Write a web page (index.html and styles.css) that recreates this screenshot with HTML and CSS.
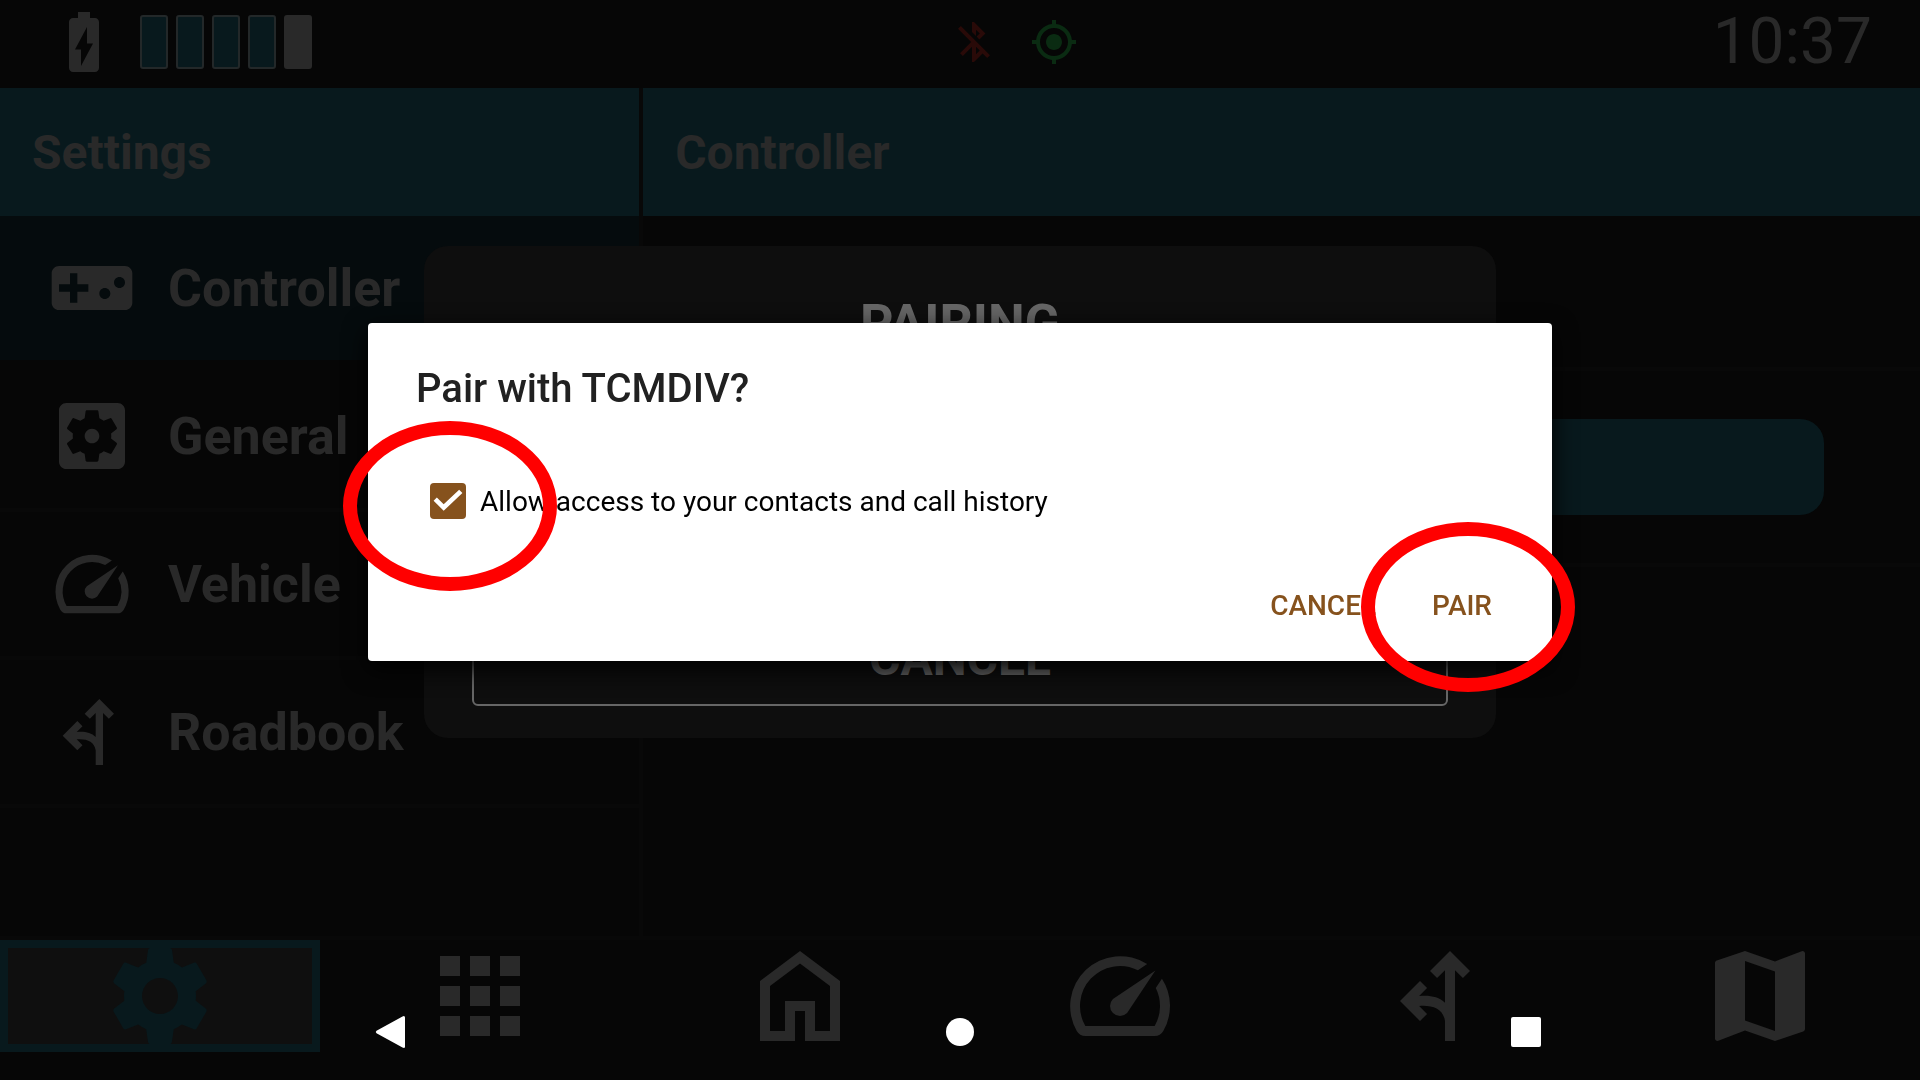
FILE: index.html
```html
<!DOCTYPE html>
<html lang="en">
<head>
  <meta charset="UTF-8">
  <title>Controller settings</title>
  <meta name="viewport" content="width=device-width, initial-scale=1.0">
  <link rel="stylesheet" href="styles.css">
</head>
<body>

<div class="app">
  <header class="status-bar">
    <div class="battery">
      <svg class="battery-icon" viewBox="0 0 24 24"><path d="M15.67 4H14V2h-4v2H8.33C7.6 4 7 4.6 7 5.33v15.33C7 21.4 7.6 22 8.33 22h7.33c.74 0 1.34-.6 1.34-1.33V5.33C17 4.6 16.4 4 15.67 4zM11 20v-5.5H9L13 7v5.5h2L11 20z"/></svg>
      <div class="battery-level">
        <span class="cell full"></span>
        <span class="cell full"></span>
        <span class="cell full"></span>
        <span class="cell full"></span>
        <span class="cell"></span>
      </div>
    </div>
    <div class="signals">
      <svg class="bluetooth" viewBox="0 0 24 24"><path d="M13 5.83l1.88 1.88-1.6 1.6 1.41 1.41 3.02-3.02L12 2h-1v5.03l2 2v-3.2zM5.41 4L4 5.41 10.59 12 5 17.59 6.41 19 11 14.41V22h1l4.29-4.29 2.3 2.29L20 18.59 5.41 4zM13 18.17v-3.76l1.88 1.88L13 18.17z"/></svg>
      <svg class="gps" viewBox="0 0 24 24"><path d="M12 8c-2.21 0-4 1.79-4 4s1.79 4 4 4 4-1.79 4-4-1.79-4-4-4zm8.94 3A8.994 8.994 0 0 0 13 3.06V1h-2v2.06A8.994 8.994 0 0 0 3.06 11H1v2h2.06A8.994 8.994 0 0 0 11 20.94V23h2v-2.06A8.994 8.994 0 0 0 20.94 13H23v-2h-2.06zM12 19c-3.87 0-7-3.13-7-7s3.13-7 7-7 7 3.13 7 7-3.13 7-7 7z"/></svg>
    </div>
    <time class="clock">10:37</time>
  </header>

  <div class="columns">
    <aside class="sidebar">
      <h1 class="title">Settings</h1>
      <nav class="menu">
        <a href="#" class="menu-item selected">
          <svg viewBox="0 0 24 24"><path d="M21 6H3c-1.1 0-2 .9-2 2v8c0 1.1.9 2 2 2h18c1.1 0 2-.9 2-2V8c0-1.1-.9-2-2-2zm-10 7H8v3H6v-3H3v-2h3V8h2v3h3v2zm4.5 2c-.83 0-1.5-.67-1.5-1.5s.67-1.5 1.5-1.5 1.5.67 1.5 1.5-.67 1.5-1.5 1.5zm4-3c-.83 0-1.5-.67-1.5-1.5S18.67 9 19.5 9s1.5.67 1.5 1.5-.67 1.5-1.5 1.5z"/></svg>
          <span>Controller</span>
        </a>
        <a href="#" class="menu-item">
          <svg viewBox="0 0 24 24"><path d="M12 10c-1.1 0-2 .9-2 2s.9 2 2 2 2-.9 2-2-.9-2-2-2zm7-7H5c-1.11 0-2 .9-2 2v14c0 1.1.89 2 2 2h14c1.11 0 2-.9 2-2V5c0-1.1-.89-2-2-2zm-1.75 9c0 .23-.02.46-.05.68l1.48 1.16c.13.11.17.3.08.45l-1.4 2.42c-.09.15-.27.21-.43.15l-1.74-.7c-.36.28-.76.51-1.18.69l-.26 1.85c-.03.17-.18.3-.35.3h-2.8c-.17 0-.32-.13-.35-.29l-.26-1.85c-.43-.18-.82-.41-1.18-.69l-1.74.7c-.16.06-.34 0-.43-.15l-1.4-2.42c-.09-.15-.05-.34.08-.45l1.48-1.16c-.03-.23-.05-.46-.05-.69 0-.23.02-.46.05-.68l-1.48-1.16c-.13-.11-.17-.3-.08-.45l1.4-2.42c.09-.15.27-.21.43-.15l1.74.7c.36-.28.76-.51 1.18-.69l.26-1.85c.03-.17.18-.3.35-.3h2.8c.17 0 .32.13.35.29l.26 1.85c.43.18.82.41 1.18.69l1.74-.7c.16-.06.34 0 .43.15l1.4 2.42c.09.15.05.34-.08.45l-1.48 1.16c.03.23.05.46.05.69z"/></svg>
          <span>General</span>
        </a>
        <a href="#" class="menu-item">
          <svg viewBox="0 0 24 24"><path d="M20.38 8.57l-1.23 1.85a8 8 0 0 1-.22 7.58H5.07A8 8 0 0 1 15.58 6.85l1.85-1.23A10 10 0 0 0 3.35 19a2 2 0 0 0 1.72 1h13.85a2 2 0 0 0 1.74-1 10 10 0 0 0-.27-10.44zm-9.79 6.84a2 2 0 0 0 2.83 0l5.66-8.49-8.49 5.66a2 2 0 0 0 0 2.83z"/></svg>
          <span>Vehicle</span>
        </a>
        <a href="#" class="menu-item">
          <svg viewBox="0 0 24 24"><path d="M4 13l4-4 1.41 1.41L7.83 12c2.1-.2 3.9.1 5.17 1.36V6.83l-1.59 1.58L10 7l4-4 4 4-1.41 1.41L15 6.83V21h-2v-4c-.37-2.4-2.4-3.2-5.17-3l1.58 1.59L8 17z"/></svg>
          <span>Roadbook</span>
        </a>
      </nav>
    </aside>

    <main class="content">
      <h2 class="title">Controller</h2>
      <div class="row"></div>
      <div class="row action">
        <button type="button" class="action-button" aria-label="Pair controller"></button>
      </div>
    </main>
  </div>

  <nav class="tab-bar">
    <a href="#" class="tab active" aria-label="Settings">
      <svg viewBox="0 0 24 24"><path d="M19.14 12.94c.04-.3.06-.61.06-.94 0-.32-.02-.64-.07-.94l2.03-1.58c.18-.14.23-.41.12-.61l-1.92-3.32c-.12-.22-.37-.29-.59-.22l-2.39.96c-.5-.38-1.03-.7-1.62-.94l-.36-2.54c-.04-.24-.24-.41-.48-.41h-3.84c-.24 0-.43.17-.47.41l-.36 2.54c-.59.24-1.13.57-1.62.94l-2.39-.96c-.22-.08-.47 0-.59.22L2.74 8.87c-.12.21-.08.47.12.61l2.03 1.58c-.05.3-.09.63-.09.94s.02.64.07.94l-2.03 1.58c-.18.14-.23.41-.12.61l1.92 3.32c.12.22.37.29.59.22l2.39-.96c.5.38 1.03.7 1.62.94l.36 2.54c.05.24.24.41.48.41h3.84c.24 0 .44-.17.47-.41l.36-2.54c.59-.24 1.13-.56 1.62-.94l2.39.96c.22.08.47 0 .59-.22l1.92-3.32c.12-.22.07-.47-.12-.61l-2.01-1.58zM12 15.6c-1.98 0-3.6-1.62-3.6-3.6s1.62-3.6 3.6-3.6 3.6 1.62 3.6 3.6-1.62 3.6-3.6 3.6z"/></svg>
    </a>
    <a href="#" class="tab" aria-label="Apps">
      <svg viewBox="0 0 24 24"><path d="M4 8h4V4H4v4zm6 12h4v-4h-4v4zm-6 0h4v-4H4v4zm0-6h4v-4H4v4zm6 0h4v-4h-4v4zm6-10v4h4V4h-4zm-6 4h4V4h-4v4zm6 6h4v-4h-4v4zm0 6h4v-4h-4v4z"/></svg>
    </a>
    <a href="#" class="tab" aria-label="Home">
      <svg viewBox="0 0 24 24"><path d="M12 5.5l6 4.5v9h-3v-6H9v6H6v-9l6-4.5M12 3L4 9v12h7v-6h2v6h7V9l-8-6z"/></svg>
    </a>
    <a href="#" class="tab" aria-label="Vehicle">
      <svg viewBox="0 0 24 24"><path d="M20.38 8.57l-1.23 1.85a8 8 0 0 1-.22 7.58H5.07A8 8 0 0 1 15.58 6.85l1.85-1.23A10 10 0 0 0 3.35 19a2 2 0 0 0 1.72 1h13.85a2 2 0 0 0 1.74-1 10 10 0 0 0-.27-10.44zm-9.79 6.84a2 2 0 0 0 2.83 0l5.66-8.49-8.49 5.66a2 2 0 0 0 0 2.83z"/></svg>
    </a>
    <a href="#" class="tab" aria-label="Roadbook">
      <svg viewBox="0 0 24 24"><path d="M4 13l4-4 1.41 1.41L7.83 12c2.1-.2 3.9.1 5.17 1.36V6.83l-1.59 1.58L10 7l4-4 4 4-1.41 1.41L15 6.83V21h-2v-4c-.37-2.4-2.4-3.2-5.17-3l1.58 1.59L8 17z"/></svg>
    </a>
    <a href="#" class="tab" aria-label="Map">
      <svg viewBox="0 0 24 24"><path d="M20.5 3l-.16.03L15 5.1 9 3 3.36 4.9c-.21.07-.36.25-.36.48V20.5c0 .28.22.5.5.5l.16-.03L9 18.9l6 2.1 5.64-1.9c.21-.07.36-.25.36-.48V3.5c0-.28-.22-.5-.5-.5zM15 19l-6-2.11V5l6 2.11V19z"/></svg>
    </a>
  </nav>
</div>

<!-- pairing card of the app, behind the system dialog -->
<div class="layer">
  <section class="pairing">
    <h2>PAIRING</h2>
    <button type="button">CANCEL</button>
  </section>
</div>

<div class="layer">
  <form class="dialog" role="dialog" aria-labelledby="dialogTitle">
    <h2 id="dialogTitle">Pair with TCMDIV?</h2>
    <div class="option">
      <input type="checkbox" id="contacts" checked>
      <label for="contacts">Allow access to your contacts and call history</label>
    </div>
    <div class="dialog-buttons">
      <button type="button">CANCEL</button>
      <button type="button">PAIR</button>
    </div>
    <span class="marker marker-check"></span>
    <span class="marker marker-pair"></span>
  </form>
</div>

<nav class="system-nav">
  <button type="button" aria-label="Back"><svg viewBox="0 0 32 32"><path d="M-1.500 14.800L24.500.4q2.500-1.200 2.500 1.100v29q0 2.300-2.500 1.100L-1.500 17.200q-1.500-1.200 0-2.400z"/></svg></button>
  <button type="button" aria-label="Home"><svg viewBox="0 0 32 32"><circle cx="16" cy="16" r="14"/></svg></button>
  <button type="button" aria-label="Recent apps"><svg viewBox="0 0 32 32"><rect x="1" y="1" width="30" height="30" rx="2"/></svg></button>
</nav>

</body>
</html>
```
FILE: styles.css
```css
* { margin: 0; padding: 0; box-sizing: border-box; font-family: Roboto, "Liberation Sans", sans-serif; }
body, html { height: 100%; overflow: hidden; background-color: #060606; color: #292929; }
svg { display: block; overflow: visible; fill: currentColor; }
a { color: inherit; text-decoration: none; }
button { border: none; background: none; color: inherit; cursor: pointer; }

.app { display: flex; flex-direction: column; height: 100%; padding-bottom: 28px; }

/* status bar */
.status-bar {
  display: grid;
  grid-template-columns: 1fr auto 1fr;
  align-items: center;
  height: 88px;
  padding: 0 48px 4px;
}
.battery { display: flex; align-items: center; gap: 20px; }
.battery-icon { width: 72px; height: 72px; }
.battery-level { display: flex; gap: 8px; }
.cell { width: 28px; height: 54px; border-radius: 3px; background-color: #292929; }
.cell.full { background-color: #08191d; border: 2px solid #232829; }
.signals { display: flex; gap: 32px; padding-left: 108px; }
.signals svg { width: 48px; height: 48px; }
.bluetooth { color: #290a08; }
.gps { color: #0a2b12; }
.clock { justify-self: end; font-size: 64px; line-height: 74px; }

/* settings list and content */
.columns { flex: 1; display: flex; min-height: 0; border-bottom: 4px solid #080808; }
.sidebar { flex: 0 0 33.5%; border-right: 4px solid #080808; }
.content { flex: 1; }
.title {
  height: 128px;
  padding: 0 32px;
  font-size: 48px;
  line-height: 130px;
  font-weight: 700;
  background-color: #08191d;
}
.menu-item {
  display: flex;
  align-items: center;
  gap: 32px;
  height: 148px;
  padding: 0 48px;
  border-bottom: 4px solid #080808;
  font-size: 52px;
  font-weight: 700;
}
.menu-item.selected { background-color: #050b0d; border-bottom-color: #060606; }
.menu-item svg { width: 88px; height: 88px; }
.row { height: 155px; border-bottom: 4px solid #080808; }
.row.action { height: 196px; padding: 48px 96px; }
.action-button { width: 100%; height: 96px; border-radius: 24px; background-color: #08191d; }

/* tabs */
.tab-bar { display: grid; grid-template-columns: repeat(6, 1fr); height: 112px; }
.tab { display: flex; align-items: center; justify-content: center; min-height: 0; }
.tab svg { flex: none; width: 120px; height: 120px; }
.tab.active { border: 8px solid #08191d; background-color: #0f0f0f; color: #08191d; }

/* overlays */
.layer {
  position: fixed;
  top: 0;
  left: 0;
  width: 100%;
  height: calc(100% - 96px);
  display: flex;
  align-items: center;
  justify-content: center;
}
.pairing {
  display: flex;
  flex-direction: column;
  justify-content: space-between;
  width: 1072px;
  height: 492px;
  padding: 48px 48px 32px;
  border-radius: 24px;
  background-color: #0e0e0e;
  color: #666;
  text-align: center;
}
.pairing h2 { font-size: 52px; line-height: 60px; font-weight: 700; }
.pairing button { height: 96px; border: 2px solid #666; border-radius: 6px; font-size: 48px; font-weight: 700; }

.dialog {
  position: relative;
  width: 1184px;
  padding: 40px 36px 20px 48px;
  border-radius: 4px;
  background-color: #fff;
  color: #212121;
  box-shadow: 0 8px 24px #000;
}
.dialog h2 { font-size: 40px; line-height: 52px; font-weight: 500; }
.option { display: flex; align-items: center; gap: 14px; height: 64px; margin-top: 54px; padding-left: 14px; }
.option label { color: #000; font-size: 28px; line-height: 36px; padding-top: 2px; }
.option input {
  appearance: none;
  display: flex;
  width: 36px;
  height: 36px;
  border-radius: 4px;
  background-color: #86521d;
}
.option input::before {
  content: "";
  flex: 1;
  background-color: #fff;
  clip-path: polygon(10% 49%, 19% 40%, 38% 59%, 81% 19%, 90% 28%, 38% 77%);
}
.dialog-buttons { display: flex; justify-content: flex-end; gap: 8px; margin-top: 36px; }
.dialog-buttons button { height: 72px; padding: 0 24px; font-size: 28px; font-weight: 500; color: #86521d; }
.marker {
  position: absolute;
  width: 214px;
  height: 170px;
  border: 14px solid #f00;
  border-radius: 50%;
  pointer-events: none;
}
.marker-check { left: -25px; top: 98px; }
.marker-pair { right: -23px; bottom: -31px; }

.system-nav {
  position: fixed;
  left: 0;
  bottom: 0;
  width: 100%;
  height: 96px;
  display: flex;
  align-items: center;
  justify-content: center;
  gap: 438px;
  color: #fff;
}
.system-nav button { width: 128px; height: 96px; }
.system-nav svg { width: 32px; height: 32px; margin: 0 auto; }
```
